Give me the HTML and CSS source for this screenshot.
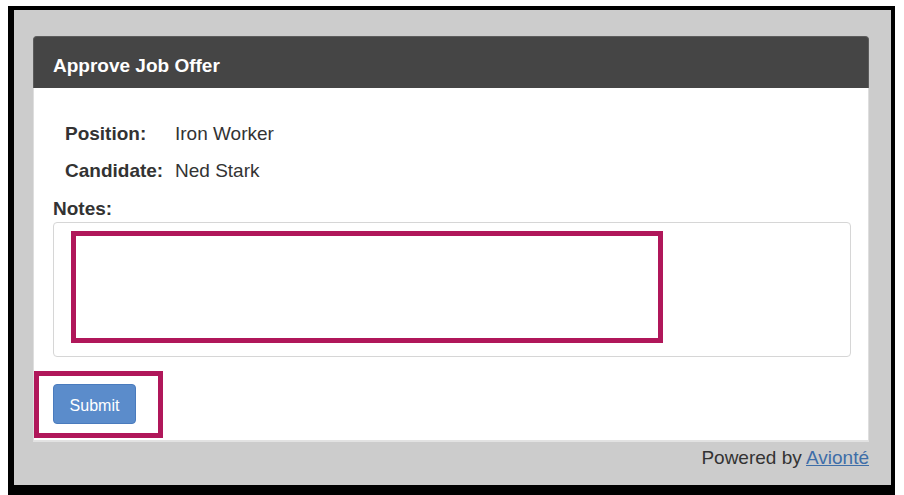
FILE: index.html
```html
<!DOCTYPE html>
<html lang="en">
<head>
<meta charset="utf-8">
<title>Approve Job Offer</title>
<link rel="stylesheet" href="styles.css">
</head>
<body>
<div class="frame">
  <div class="card">
    <div class="card-header">Approve Job Offer</div>
    <div class="card-body">
      <div class="info">
        <div class="label">Position:</div><div class="value">Iron Worker</div>
        <div class="label">Candidate:</div><div class="value">Ned Stark</div>
      </div>
      <div class="notes-label">Notes:</div>
      <div class="notes-wrap">
        <textarea class="notes"></textarea>
        <div class="mark mark-notes"></div>
      </div>
      <div class="submit-wrap">
        <button class="btn" type="button">Submit</button>
        <div class="mark mark-submit"></div>
      </div>
    </div>
  </div>
  <div class="footer">Powered by <a href="#">Avionté</a></div>
</div>
</body>
</html>
```
FILE: styles.css
```css
html, body {
  margin: 0;
  padding: 0;
  background: #ffffff;
  font-family: "Liberation Sans", Arial, sans-serif;
  color: #333333;
  overflow: hidden;
}

.frame {
  margin: 6px 0 0 8px;
  width: 877px;
  height: 449px;
  background: #cccccc;
  border-style: solid;
  border-color: #000000;
  border-width: 4px 4px 12px 6px;
  padding-top: 26px;
  box-sizing: content-box;
}

.card {
  margin-left: 19px;
  width: 836px;
}

.card-header {
  height: 52px;
  box-sizing: border-box;
  padding: 18px 0 0 19px;
  background: #454545;
  border: 1px solid #5c5c5c;
  border-bottom: none;
  border-radius: 4px 4px 0 0;
  color: #ffffff;
  font-weight: bold;
  font-size: 19px;
  line-height: 22px;
}

.card-body {
  background: #ffffff;
  height: 354px;
  box-sizing: border-box;
  padding: 35px 18px 0 19px;
  border-left: 1px solid #dedede;
  border-right: 1px solid #dedede;
  border-bottom: 2px solid #e2e2e2;
}

.info {
  display: grid;
  grid-template-columns: 110px 1fr;
  row-gap: 15px;
  padding-left: 12px;
  font-size: 19px;
  line-height: 22px;
}

.label {
  font-weight: bold;
}

.notes-label {
  margin-top: 16px;
  font-size: 19px;
  line-height: 22px;
  font-weight: bold;
}

.notes-wrap {
  position: relative;
  margin-top: 2px;
  height: 135px;
}

.notes {
  display: block;
  width: 798px;
  height: 135px;
  box-sizing: border-box;
  margin: 0;
  border: 1px solid #d6d6d6;
  border-radius: 4px;
  resize: none;
  background: #ffffff;
  font-family: inherit;
}

.mark {
  position: absolute;
  border: 5px solid #b0175a;
  box-sizing: border-box;
}

.mark-notes {
  left: 18px;
  top: 9px;
  width: 592px;
  height: 112px;
}

.submit-wrap {
  position: relative;
  margin-top: 27px;
  width: 83px;
  height: 40px;
}

.btn {
  display: block;
  width: 83px;
  height: 40px;
  margin: 0;
  padding: 3px 0 0 0;
  box-sizing: border-box;
  background: #5b8ccb;
  border: 1px solid #4a7bbd;
  border-radius: 4px;
  color: #ffffff;
  font-family: "Liberation Sans", Arial, sans-serif;
  font-size: 16px;
}

.mark-submit {
  left: -19px;
  top: -13px;
  width: 129px;
  height: 67px;
}

.footer {
  margin-top: 5px;
  width: 855px;
  text-align: right;
  font-size: 19px;
  line-height: 22px;
  color: #333333;
}

.footer a {
  color: #3e6ea8;
  text-decoration: underline;
}
```
